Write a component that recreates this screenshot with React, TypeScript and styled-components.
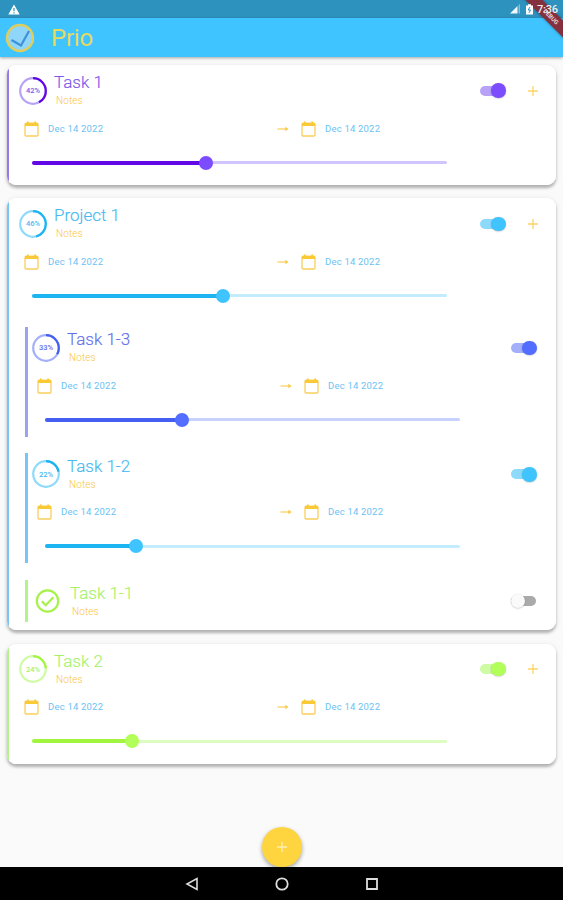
import React from "react";
import styled, { createGlobalStyle } from "styled-components";

const GlobalStyle = createGlobalStyle`
  * { box-sizing: border-box; }
  body { margin: 0; background: #fafafa; font-family: Roboto, "Liberation Sans", sans-serif; }
  svg { display: block; flex: none; }
`;

interface Tone {
  edge: string;
  text: string;
  active: string;
  thumb: string;
  light: string;
  rail: string;
}

const purple: Tone = { edge: "#9679e8", text: "#7a57e8", active: "#6207e6", thumb: "#7c4dff", light: "#b7a2f8", rail: "#d2c5fd" };
const sky: Tone = { edge: "#78c6f8", text: "#45b9f0", active: "#1db4f2", thumb: "#40c4ff", light: "#8edafc", rail: "#c3edff" };
const indigo: Tone = { edge: "#9aa2f2", text: "#5f70ec", active: "#4560f0", thumb: "#536dfe", light: "#a4aff9", rail: "#c9d1ff" };
const lime: Tone = { edge: "#b0f585", text: "#a5f269", active: "#a2f53f", thumb: "#b2ff59", light: "#cffba5", rail: "#dcfcc0" };

interface Task {
  title: string;
  percent: number;
  tone: Tone;
  done?: boolean;
  children?: Task[];
}

const tasks: Task[] = [
  { title: "Task 1", percent: 42, tone: purple },
  {
    title: "Project 1",
    percent: 46,
    tone: sky,
    children: [
      { title: "Task 1-3", percent: 33, tone: indigo },
      { title: "Task 1-2", percent: 22, tone: sky },
      { title: "Task 1-1", percent: 100, tone: lime, done: true },
    ],
  },
  { title: "Task 2", percent: 24, tone: lime },
];

const Screen = styled.div`
  position: relative;
  width: 563px;
  height: 900px;
  display: flex;
  flex-direction: column;
  overflow: hidden;
  background: #fafafa;
`;
const StatusBar = styled.div`
  flex: none;
  height: 18px;
  background: #2e92bf;
  display: flex;
  align-items: center;
  padding: 0 5px 0 8px;
`;
const Signals = styled.div`
  position: relative;
  z-index: 2;
  margin-left: auto;
  display: flex;
  align-items: center;
  gap: 5px;
`;
const Clock = styled.span`
  width: 21px;
  margin-left: -1px;
  padding-top: 1px;
  font-size: 11px;
  line-height: 18px;
  font-weight: 500;
  letter-spacing: -0.2px;
  color: #e8eef2;
`;
const AppBar = styled.header`
  flex: none;
  height: 39px;
  position: relative;
  background: #40c4ff;
  box-shadow: 0 1px 3px rgba(0, 0, 0, 0.35);
  display: flex;
  align-items: center;
  padding-left: 5px;
  gap: 16px;
`;
const AppTitle = styled.h1`
  margin: 0;
  padding-top: 2px;
  font-size: 24px;
  line-height: 39px;
  font-weight: 400;
  letter-spacing: -0.2px;
  color: #e3d963;
`;
const Ribbon = styled.div`
  position: absolute;
  z-index: 1;
  right: -38px;
  top: 8px;
  width: 106px;
  height: 12px;
  padding-left: 8px;
  transform: rotate(45deg);
  background: #84303f;
  box-shadow: 0 0 3px rgba(0, 0, 0, 0.4);
  color: #ead9dc;
  font-size: 6px;
  font-weight: 700;
  line-height: 12px;
  text-align: center;
`;
const List = styled.main`
  flex: 1;
  padding: 8px 7px 0;
  display: flex;
  flex-direction: column;
  gap: 13.2px;
`;
const Card = styled.section<{ $edge: string }>`
  border-radius: 9px;
  background: linear-gradient(to right, ${(p) => p.$edge} 2.5px, #fff 2.5px);
  box-shadow: 0 2.5px 3px rgba(0, 0, 0, 0.26), 0 1px 6px rgba(0, 0, 0, 0.08);
  padding: 4.7px 0 5.3px 12px;
`;
const SubList = styled.div`
  display: flex;
  flex-direction: column;
  gap: 16.6px;
  padding: 14px 0 3px 6px;
`;
const SubItem = styled.div<{ $edge: string }>`
  border-left: 3px solid ${(p) => p.$edge};
  padding-left: 4px;
`;
const HeaderRow = styled.div<{ $end: number }>`
  height: 42px;
  display: flex;
  align-items: center;
  padding-right: ${(p) => p.$end}px;
`;
const RingBox = styled.div`
  display: grid;
  place-items: center;
  width: 28px;
  height: 28px;
  > * { grid-area: 1 / 1; }
`;
const Percent = styled.span<{ $color: string }>`
  font-size: 7.5px;
  line-height: 9px;
  font-weight: 500;
  color: ${(p) => p.$color};
`;
const Names = styled.div`
  flex: 1;
  padding: 0 0 2px 7px;
`;
const Title = styled.div<{ $color: string }>`
  font-size: 17px;
  line-height: 22px;
  font-weight: 300;
  -webkit-text-stroke: 0.15px;
  color: ${(p) => p.$color};
`;
const Notes = styled.div`
  padding: 1px 0 0 2px;
  font-size: 10px;
  line-height: 14px;
  font-weight: 300;
  letter-spacing: 0.1px;
  color: #fbc544;
`;
const Toggle = styled.div<{ $on: boolean }>`
  display: grid;
  width: 26px;
  height: 15px;
  align-items: center;
  justify-items: ${(p) => (p.$on ? "end" : "start")};
  > * { grid-area: 1 / 1; }
`;
const Track = styled.span<{ $color: string }>`
  justify-self: center;
  width: 25px;
  height: 10px;
  border-radius: 5px;
  background: ${(p) => p.$color};
`;
const Knob = styled.span<{ $color: string }>`
  width: 14.5px;
  height: 14.5px;
  border-radius: 50%;
  background: ${(p) => p.$color};
  box-shadow: 0 0.5px 1.5px rgba(0, 0, 0, 0.25);
`;
const AddSlot = styled.div`
  margin-left: 21px;
`;
const DateRow = styled.div<{ $split: number }>`
  height: 34px;
  display: grid;
  grid-template-columns: ${(p) => p.$split}px auto;
  align-items: center;
  padding-left: 5px;
`;
const DateGroup = styled.div`
  display: flex;
  align-items: center;
`;
const DateText = styled.span`
  margin-left: 9px;
  font-size: 9.5px;
  line-height: 14px;
  letter-spacing: 0.2px;
  color: #6bc2f3;
`;
const ArrowSlot = styled.div`
  width: 24px;
`;
const SliderRow = styled.div`
  height: 34px;
  display: flex;
  align-items: center;
  padding-left: 13px;
`;
const Rail = styled.div<{ $color: string }>`
  width: 415px;
  height: 3px;
  border-radius: 2px;
  background: ${(p) => p.$color};
  display: flex;
  align-items: center;
`;
const Fill = styled.div<{ $color: string }>`
  height: 4px;
  flex: none;
  border-radius: 2px;
  background: ${(p) => p.$color};
`;
const Thumb = styled.div<{ $color: string }>`
  flex: none;
  width: 14px;
  height: 14px;
  margin-left: -7px;
  border-radius: 50%;
  background: ${(p) => p.$color};
`;
const Dock = styled.div`
  flex: none;
  height: 40px;
  display: flex;
  justify-content: center;
`;
const Fab = styled.button`
  width: 40px;
  height: 40px;
  padding: 0;
  border: 0;
  border-radius: 50%;
  background: #ffd53f;
  box-shadow: 0 2px 4px rgba(0, 0, 0, 0.35);
  display: grid;
  place-items: center;
`;
const NavBar = styled.nav`
  position: relative;
  flex: none;
  height: 33px;
  background: #000;
  display: flex;
  justify-content: center;
  align-items: center;
  gap: 76px;
`;

const Plus = ({ color }: { color: string }) => (
  <svg width="12" height="12" viewBox="0 0 12 12" stroke={color} strokeWidth="1.3">
    <path d="M6 1v10M1 6h10" />
  </svg>
);

const Calendar = () => (
  <svg width="15" height="16" viewBox="0 0 15 16">
    <path d="M2 2.3h11q1 0 1 1V14q0 1-1 1H2q-1 0-1-1V3.300q0-1 1-1z" fill="none" stroke="#f9ce5c" strokeWidth="1.3" />
    <path d="M1 1.800h13v3.300H1zM3 .5h1.700V3H3zM10.300.5H12V3h-1.700z" fill="#f9ca35" />
  </svg>
);

const Arrow = () => (
  <svg width="12" height="8" viewBox="0 0 12 8">
    <path d="M.5 4h9" stroke="#fad160" strokeWidth="1.3" />
    <path d="M8.300 1.700 11.600 4 8.300 6.300z" fill="#f9ca45" />
  </svg>
);

const Ring = ({ percent, tone }: { percent: number; tone: Tone }) => {
  const length = 2 * Math.PI * 12.8;
  return (
    <RingBox>
      <svg width="28" height="28" viewBox="0 0 28 28" fill="none" strokeWidth="2.2">
        <circle cx="14" cy="14" r="12.8" stroke={tone.light} />
        <circle cx="14" cy="14" r="12.8" stroke={tone.active} strokeDasharray={`${(length * percent) / 100} ${length}`} transform="rotate(-90 14 14)" />
      </svg>
      <Percent $color={tone.text}>{percent}%</Percent>
    </RingBox>
  );
};

const DoneMark = () => (
  <svg width="31" height="28" viewBox="0 0 31 28" fill="none" stroke="#a6f24b" strokeWidth="2.200">
    <circle cx="15.500" cy="14" r="10.700" />
    <path d="m9.800 14.200 3.900 4 7.700-8" />
  </svg>
);

const TaskBody = ({ task, nested }: { task: Task; nested?: boolean }) => {
  const { tone, done, percent, title } = task;
  return (
    <div>
      <HeaderRow $end={nested ? 19.5 : 17.5}>
        {done ? <DoneMark /> : <Ring percent={percent} tone={tone} />}
        <Names>
          <Title $color={tone.text}>{title}</Title>
          <Notes>Notes</Notes>
        </Names>
        <Toggle $on={!done}>
          <Track $color={done ? "#aaaaaa" : tone.light} />
          <Knob $color={done ? "#fafafa" : tone.thumb} />
        </Toggle>
        {!nested && (
          <AddSlot>
            <Plus color="#fbd469" />
          </AddSlot>
        )}
      </HeaderRow>
      {!done && (
        <>
          <DateRow $split={nested ? 243 : 253}>
            <DateGroup>
              <Calendar />
              <DateText>Dec 14 2022</DateText>
            </DateGroup>
            <DateGroup>
              <ArrowSlot>
                <Arrow />
              </ArrowSlot>
              <Calendar />
              <DateText>Dec 14 2022</DateText>
            </DateGroup>
          </DateRow>
          <SliderRow>
            <Rail $color={tone.rail}>
              <Fill $color={tone.active} style={{ width: `${percent}%` }} />
              <Thumb $color={tone.thumb} />
            </Rail>
          </SliderRow>
        </>
      )}
    </div>
  );
};

export default function App() {
  return (
    <Screen>
      <GlobalStyle />
      <StatusBar>
        <svg width="12" height="11" viewBox="0 0 12 11">
          <path d="M6 .5 11.700 10.500H.3z" fill="#fff" />
          <path d="M6 4v3.300M6 8.200v1.200" stroke="#2e92bf" strokeWidth="1.200" />
        </svg>
        <Signals>
          <svg width="11" height="10" viewBox="0 0 11 10">
            <path d="M0 9.500 7.500 2v7.500z" fill="#f2f8fb" />
            <path d="M8.500 9.500V1L10 0v9.500z" fill="#83bdd7" />
          </svg>
          <svg width="7" height="11" viewBox="0 0 7 11">
            <path d="M0 1.500h2V.3h3v1.200h2v9H0z" fill="#fff" />
            <path d="M4 3 2.200 6h2.300L3 8.800" fill="none" stroke="#2e92bf" />
          </svg>
          <Clock>7:36</Clock>
        </Signals>
      </StatusBar>
      <AppBar>
        <svg width="30" height="30" viewBox="0 0 30 30" fill="none">
          <circle cx="15" cy="15" r="13" fill="#8fd6f8" stroke="#dfce5d" strokeWidth="2.400" />
          <path d="m6.500 17 9.500 5.500 8-14.500" stroke="#3f91d8" strokeWidth="2.200" />
        </svg>
        <AppTitle>Prio</AppTitle>
      </AppBar>
      <Ribbon>DEBUG</Ribbon>
      <List>
        {tasks.map((task) => (
          <Card key={task.title} $edge={task.tone.edge}>
            <TaskBody task={task} />
            {task.children && (
              <SubList>
                {task.children.map((child) => (
                  <SubItem key={child.title} $edge={child.tone.edge}>
                    <TaskBody task={child} nested />
                  </SubItem>
                ))}
              </SubList>
            )}
          </Card>
        ))}
      </List>
      <Dock>
        <Fab aria-label="Add">
          <Plus color="#fff0b5" />
        </Fab>
      </Dock>
      <NavBar>
        <svg width="14" height="14" viewBox="0 0 14 14" fill="none" stroke="#ddd" strokeWidth="1.600">
          <path d="M12 1.500v11L2 7z" />
        </svg>
        <svg width="14" height="14" viewBox="0 0 14 14" fill="none" stroke="#ddd" strokeWidth="1.800">
          <circle cx="7" cy="7" r="5.700" />
        </svg>
        <svg width="14" height="14" viewBox="0 0 14 14" fill="none" stroke="#ddd" strokeWidth="1.800">
          <path d="M2 2h10v10H2z" />
        </svg>
      </NavBar>
    </Screen>
  );
}
